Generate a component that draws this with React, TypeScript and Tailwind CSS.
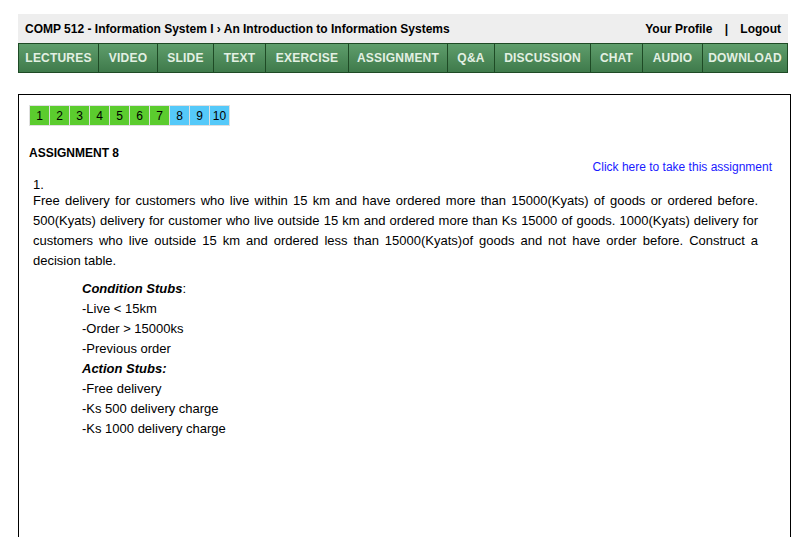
const navItems = [
  { label: "LECTURES", w: "w-[79px]" },
  { label: "VIDEO", w: "w-[59px]" },
  { label: "SLIDE", w: "w-[56px]" },
  { label: "TEXT", w: "w-[52px]" },
  { label: "EXERCISE", w: "w-[83px]" },
  { label: "ASSIGNMENT", w: "w-[99px]" },
  { label: "Q&A", w: "w-[47px]" },
  { label: "DISCUSSION", w: "w-[96px]" },
  { label: "CHAT", w: "w-[52px]" },
  { label: "AUDIO", w: "w-[60px]" },
  { label: "DOWNLOAD", w: "flex-1" },
];

const pages = [1, 2, 3, 4, 5, 6, 7, 8, 9, 10];

const Header = () => {
  return (
    <div className="flex items-center justify-between h-[29px] bg-[#eeeeee] px-[7px] text-[12px] font-bold text-black">
      <span>COMP 512 - Information System I › An Introduction to Information Systems</span>
      <span>
        Your Profile <span className="mx-[9px]">|</span> Logout
      </span>
    </div>
  );
};

const Navbar = () => {
  return (
    <div className="flex h-[30px] border border-[#1e4a25] bg-gradient-to-b from-[#5f9e6c] to-[#3f7a4b]">
      {navItems.map((item, i) => (
        <div
          key={item.label}
          className={`${item.w} flex items-center justify-center text-[12px] font-bold tracking-[0.2px] text-[#e3f0e3] ${
            i > 0 ? "border-l border-[#1e4a25]" : ""
          }`}
        >
          {item.label}
        </div>
      ))}
    </div>
  );
};

const Pager = () => {
  return (
    <div className="flex w-fit border border-[#e0e0e0] bg-[#e0e0e0] gap-[1px]">
      {pages.map((n) => (
        <div
          key={n}
          className={`w-[19px] h-[19px] flex items-center justify-center text-[12px] text-black ${
            n <= 7 ? "bg-[#5bcc2e]" : "bg-[#55c9f9]"
          }`}
        >
          {n}
        </div>
      ))}
    </div>
  );
};

const Assignment = () => {
  return (
    <div className="mt-[20px]">
      <h2 className="text-[12px] font-bold leading-[14px]">ASSIGNMENT 8</h2>
      <div className="flex justify-end pr-[8px]">
        <a href="#" className="text-[12px] text-[#1a1aff] leading-[14px]">
          Click here to take this assignment
        </a>
      </div>
      <div className="pl-[4px] pr-[22px] text-[13px] leading-[20px] mt-[5px]">
        <p className="leading-[12px]">1.</p>
        <p className="text-justify">
          Free delivery for customers who live within 15 km and have ordered more than 15000(Kyats) of goods or
          ordered before. 500(Kyats) delivery for customer who live outside 15 km and ordered more than Ks 15000 of
          goods. 1000(Kyats) delivery for customers who live outside 15 km and ordered less than 15000(Kyats)of goods
          and not have order before. Construct a decision table.
        </p>
        <div className="pl-[49px] mt-[8px]">
          <p>
            <b className="italic">Condition Stubs</b>:
          </p>
          <p>-Live &lt; 15km</p>
          <p>-Order &gt; 15000ks</p>
          <p>-Previous order</p>
          <p>
            <b className="italic">Action Stubs:</b>
          </p>
          <p>-Free delivery</p>
          <p>-Ks 500 delivery charge</p>
          <p>-Ks 1000 delivery charge</p>
        </div>
      </div>
    </div>
  );
};

const App = () => {
  return (
    <div className="h-[537px] overflow-hidden bg-white font-['Liberation_Sans',Arial,sans-serif] text-black">
      <div className="pt-[14px] pl-[18px] w-[788px]">
        <Header />
        <Navbar />
      </div>
      <div className="ml-[18px] w-[773px] mt-[21px] h-[460px] border border-black px-[10px] pt-[10px]">
        <Pager />
        <Assignment />
      </div>
    </div>
  );
};

export default App;
